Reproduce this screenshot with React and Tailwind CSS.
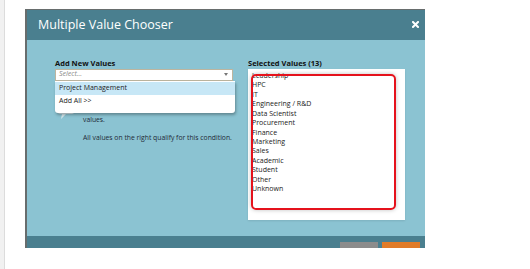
import React from 'react';

// Values already picked on the right side
const selectedValues = [
  'Leadership',
  'HPC',
  'IT',
  'Engineering / R&D',
  'Data Scientist',
  'Procurement',
  'Finance',
  'Marketing',
  'Sales',
  'Academic',
  'Student',
  'Other',
  'Unknown',
];

const font = { fontFamily: '"Open Sans", "Liberation Sans", sans-serif' };

const CloseIcon = () => (
  <svg width="7" height="7" viewBox="0 0 7 7" className="block">
    <path d="M1 1 L6 6 M6 1 L1 6" stroke="#ffffff" strokeWidth="2" strokeLinecap="square" />
  </svg>
);

const Bubble = () => (
  <svg width="18" height="20" viewBox="0 0 18 20" className="block">
    <path d="M3 1 H15 Q17 1 17 3 V12 Q17 14 15 14 H9 L4 19 L5 14 H3 Q1 14 1 12 V3 Q1 1 3 1 Z" fill="#d6e7ec" />
  </svg>
);

const App = () => {
  return (
    <div className="w-[530px] h-[269px] bg-white flex overflow-hidden" style={font}>
      {/* page gutter on the left */}
      <div className="w-[5px] h-full bg-[#f1f1f1] border-r border-[#dcdcdc]" />

      {/* Dialog, clipped at the bottom of the visible area */}
      <div className="ml-[20px] mt-[9px] w-[400px] h-[239px] overflow-hidden flex flex-col border-t border-l-2 border-[#676d6d]">
        {/* Header */}
        <div className="h-[30px] bg-[#4a7f8f] flex items-center justify-between pl-[11px] pr-[6px]">
          <span className="text-white text-[12.5px] leading-none">Multiple Value Chooser</span>
          <CloseIcon />
        </div>

        {/* Body */}
        <div className="h-[199px] bg-[#8bc3d2] flex pt-[18px] pl-[28px] text-[7px] text-[#222]">
          {/* Left column */}
          <div className="w-[178px] shrink-0">
            <div className="h-[11px] leading-[10px] font-bold text-[#111] text-[7.5px]">Add New Values</div>
            <div className="relative">
              <div className="h-[12px] bg-white border border-[#bdb59f] flex items-center justify-between pl-[3px] pr-[4px]">
                <span className="italic text-[#8a8a8a]">Select...</span>
                <span className="w-0 h-0 border-l-[2px] border-r-[2px] border-t-[3px] border-l-transparent border-r-transparent border-t-[#777]" />
              </div>

              {/* open dropdown */}
              <div className="absolute left-0 top-[12px] w-[180px] bg-white rounded-b-[3px] pt-[1px] pb-[5px] shadow-[1px_2px_3px_rgba(0,0,0,0.3)] z-10">
                <div className="h-[13px] bg-[#c7e7f6] flex items-center pl-[4px] text-[#222]">Project Management</div>
                <div className="h-[13px] flex items-center pl-[4px] text-[#222]">Add All &gt;&gt;</div>
              </div>

              {/* help text, its first line sits behind the dropdown */}
              <div className="flex mt-[20px]">
                <div className="w-[28px] shrink-0 pl-[2px] -mt-[1px]">
                  <Bubble />
                </div>
                <div className="text-[#1f2a36] text-[6.8px]">
                  <div className="h-[14px]" />
                  <p className="leading-[9.5px]">values.</p>
                  <p className="mt-[9px] leading-[9.5px] whitespace-nowrap">All values on the right qualify for this condition.</p>
                </div>
              </div>
            </div>
          </div>

          {/* Right column */}
          <div className="ml-[15px] w-[157px] shrink-0">
            <div className="h-[11px] leading-[10px] font-bold text-[#111] text-[7.5px]">Selected Values (13)</div>
            <div className="relative h-[151px] bg-white pt-[2.5px] pl-[4px] shadow-[0_1px_2px_rgba(0,0,0,0.1)]">
              {selectedValues.map((value) => (
                <div key={value} className="leading-[9.4px] text-[#1a1a1a]">{value}</div>
              ))}
              {/* red highlight drawn over the list */}
              <div className="absolute left-[3px] top-[5px] w-[145px] h-[136px] border-2 border-[#e5121c] rounded-[5px] shadow-[0_0_4px_rgba(0,0,0,0.25)]" />
            </div>
          </div>
        </div>

        {/* Footer (mostly cut off) */}
        <div className="h-[12px] bg-[#4a7f8f] flex justify-end items-start gap-[4px] pt-[6px] pr-[5px]">
          <div className="w-[38px] h-[6px] bg-[#8c8c8c]" />
          <div className="w-[38px] h-[6px] bg-[#e07b28]" />
        </div>
      </div>
    </div>
  );
};

export default App;
